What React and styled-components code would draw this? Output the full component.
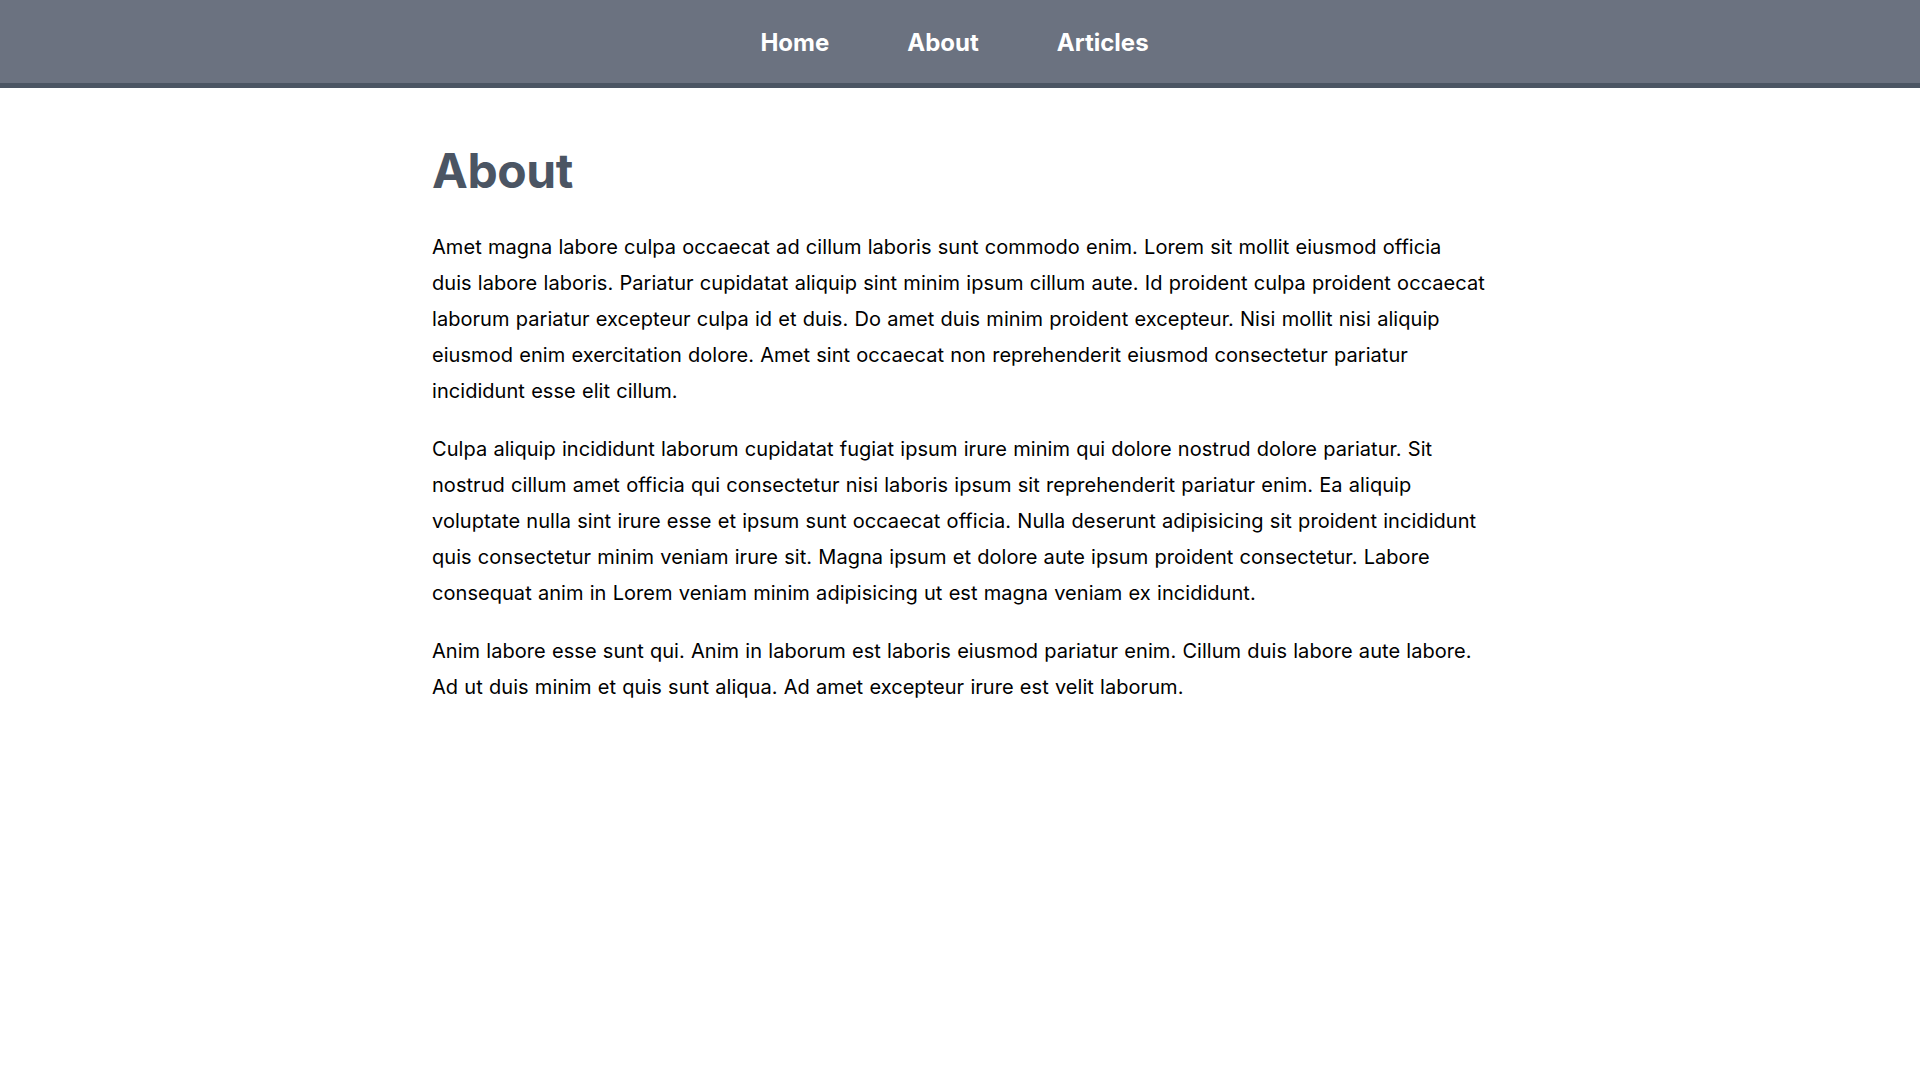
import React from "react";
import styled, { createGlobalStyle } from "styled-components";

const GlobalStyle = createGlobalStyle`
  html, body { margin: 0; padding: 0; background: #ffffff; }
  body { font-family: Inter, "Noto Sans", "Liberation Sans", sans-serif; color: #000; }
  * { box-sizing: border-box; }
`;

const NavBar = styled.nav`
  height: 88px;
  background: #6b7280;
  border-bottom: 5px solid #4b5563;
  display: flex;
  align-items: center;
  justify-content: center;
`;

const NavList = styled.ul`
  list-style: none;
  margin: 0;
  padding: 1px 11px 0 0;
  display: flex;
  gap: 78px;
`;

const NavLink = styled.a`
  font-family: Inter, "Liberation Sans", sans-serif;
  font-weight: 700;
  font-size: 24px;
  color: #ffffff;
  text-decoration: none;
  cursor: pointer;
`;

const Main = styled.main`
  max-width: 1056px;
  margin: 0 auto;
  padding: 54px 2px 0 0;
`;

const Title = styled.h1`
  margin: 0 0 29px;
  font-size: 48px;
  line-height: 1.2;
  font-weight: 700;
  letter-spacing: -0.4px;
  color: #4b5563;
`;

const Paragraph = styled.p`
  margin: 0 0 22px;
  font-size: 20px;
  line-height: 36px;
  letter-spacing: 0.05px;
  word-spacing: 0.5px;
  color: #000;
`;

const paragraphs = [
  "Amet magna labore culpa occaecat ad cillum laboris sunt commodo enim. Lorem sit mollit eiusmod officia duis labore laboris. Pariatur cupidatat aliquip sint minim ipsum cillum aute. Id proident culpa proident occaecat laborum pariatur excepteur culpa id et duis. Do amet duis minim proident excepteur. Nisi mollit nisi aliquip eiusmod enim exercitation dolore. Amet sint occaecat non reprehenderit eiusmod consectetur pariatur incididunt esse elit cillum.",
  "Culpa aliquip incididunt laborum cupidatat fugiat ipsum irure minim qui dolore nostrud dolore pariatur. Sit nostrud cillum amet officia qui consectetur nisi laboris ipsum sit reprehenderit pariatur enim. Ea aliquip voluptate nulla sint irure esse et ipsum sunt occaecat officia. Nulla deserunt adipisicing sit proident incididunt quis consectetur minim veniam irure sit. Magna ipsum et dolore aute ipsum proident consectetur. Labore consequat anim in Lorem veniam minim adipisicing ut est magna veniam ex incididunt.",
  "Anim labore esse sunt qui. Anim in laborum est laboris eiusmod pariatur enim. Cillum duis labore aute labore. Ad ut duis minim et quis sunt aliqua. Ad amet excepteur irure est velit laborum.",
];

export default function App() {
  return (
    <>
      <GlobalStyle />
      <NavBar>
        <NavList>
          <li><NavLink href="#">Home</NavLink></li>
          <li><NavLink href="#">About</NavLink></li>
          <li><NavLink href="#">Articles</NavLink></li>
        </NavList>
      </NavBar>
      <Main>
        <Title>About</Title>
        {paragraphs.map((t, i) => (
          <Paragraph key={i}>{t}</Paragraph>
        ))}
      </Main>
    </>
  );
}
